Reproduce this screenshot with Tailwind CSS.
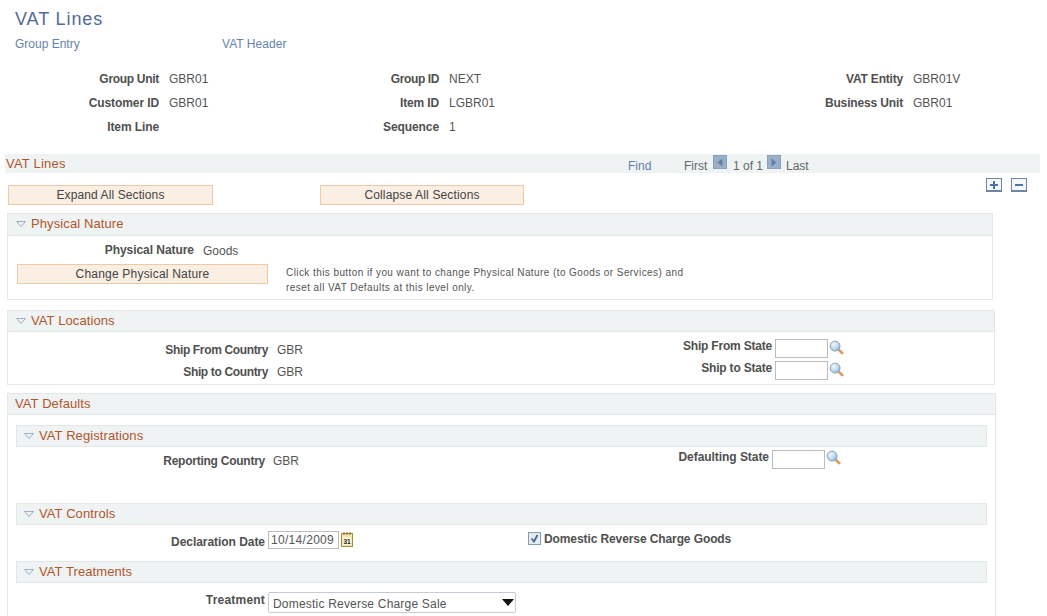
<!DOCTYPE html>
<html>
<head>
<meta charset="utf-8">
<script src="https://cdn.jsdelivr.net/npm/@tailwindcss/browser@4"></script>
</head>
<body class="bg-white">
<svg width="0" height="0" class="absolute">
  <defs>
    <radialGradient id="lens" cx="0.38" cy="0.35" r="0.75"><stop offset="0" stop-color="#f2f8fd"/><stop offset="0.6" stop-color="#b6d5ee"/><stop offset="1" stop-color="#6fa5d6"/></radialGradient>
    <symbol id="mag" viewBox="0 0 16 16"><path d="M10 10L14 14" stroke="#dd9a5e" stroke-width="3" stroke-linecap="round"/><circle cx="6.5" cy="6.5" r="5.3" fill="url(#lens)" stroke="#8ba3b8" stroke-width="1"/></symbol>
    <symbol id="tri" viewBox="0 0 10 8"><path d="M0.5 1.5H9.5L5 6.5Z" fill="#edf2f6" stroke="#9db0c2" stroke-width="1"/></symbol>
  </defs>
</svg>
<div class="w-[1047px] h-[616px] overflow-hidden relative text-[12px] leading-[14px] text-[#555555] font-['Liberation_Sans',Arial,sans-serif]">

  <div class="pl-[15px] pt-[9px]">
    <h1 class="text-[18px] leading-[21px] tracking-[0.9px] text-[#4f6b96]">VAT Lines</h1>
    <div class="flex mt-[7px] text-[#6583ad]">
      <a class="w-[207px]">Group Entry</a>
      <a class="tracking-[0.05px]">VAT Header</a>
    </div>
  </div>

  <div class="mt-[21px] grid grid-cols-[159px_280px_464px_auto] gap-y-[10px]">
    <div class="font-bold text-right text-[#4f4f4f] tracking-[-0.3px]">Group Unit</div>
    <div class="pl-[10px] flex justify-between"><span>GBR01</span><span class="font-bold text-[#4f4f4f] tracking-[-0.4px]">Group ID</span></div>
    <div class="flex justify-between pl-[10px]"><span>NEXT</span><span class="font-bold text-[#4f4f4f] tracking-[-0.2px]">VAT Entity</span></div>
    <div class="pl-[10px]">GBR01V</div>

    <div class="font-bold text-right text-[#4f4f4f] tracking-[-0.1px]">Customer ID</div>
    <div class="pl-[10px] flex justify-between"><span>GBR01</span><span class="font-bold text-[#4f4f4f] tracking-[-0.15px]">Item ID</span></div>
    <div class="flex justify-between pl-[10px]"><span>LGBR01</span><span class="font-bold text-[#4f4f4f] tracking-[-0.15px]">Business Unit</span></div>
    <div class="pl-[10px]">GBR01</div>

    <div class="font-bold text-right text-[#4f4f4f] tracking-[-0.1px]">Item Line</div>
    <div class="pl-[10px] flex justify-end"><span class="font-bold text-[#4f4f4f] tracking-[-0.1px]">Sequence</span></div>
    <div class="pl-[10px]">1</div>
    <div></div>
  </div>

  <div class="mt-[20px] ml-[5px] w-[1035px] h-[19px] bg-[#f0f3f4] flex items-center relative">
    <span class="ml-[1px] text-[13px] tracking-[0.2px] text-[#b0562a]">VAT Lines</span>
    <span class="absolute left-[623px] top-[5px] text-[#5f7ea8]">Find</span>
    <span class="absolute left-[679px] top-[5px] text-[#666666]">First</span>
    <span class="absolute left-[708px] top-[1px] w-[14px] h-[14px] bg-[#9bb0c8] border border-[#8ba0ba] flex items-center justify-center">
      <svg width="6" height="9" viewBox="0 0 6 9"><path d="M5.5 0.5V8.5L0.5 4.5Z" fill="#64809f"/></svg>
    </span>
    <span class="absolute left-[728px] top-[5px] text-[#666666]">1 of 1</span>
    <span class="absolute left-[762px] top-[1px] w-[14px] h-[14px] bg-[#9bb0c8] border border-[#8ba0ba] flex items-center justify-center">
      <svg width="6" height="9" viewBox="0 0 6 9"><path d="M0.5 0.5V8.5L5.5 4.5Z" fill="#5f7fb5"/></svg>
    </span>
    <span class="absolute left-[781px] top-[5px] text-[#666666]">Last</span>
  </div>

  <div class="relative h-[40px]">
    <div class="absolute left-[986px] top-[5px] w-[16px] h-[14px] border border-[#6d86a3] border-b-2 flex items-center justify-center bg-[#f6f8fb]">
      <svg width="10" height="10" viewBox="0 0 10 10"><path d="M5 1V9M1 5H9" stroke="#4a72ad" stroke-width="2"/></svg>
    </div>
    <div class="absolute left-[1011px] top-[5px] w-[16px] h-[14px] border border-[#6d86a3] border-b-2 flex items-center justify-center bg-[#f6f8fb]">
      <svg width="10" height="10" viewBox="0 0 10 10"><path d="M1 5H9" stroke="#4a72ad" stroke-width="2"/></svg>
    </div>
    <div class="flex pl-[8px] pt-[12px] gap-[107px]">
      <button class="w-[205px] h-[20px] bg-[#fbeee2] border border-[#f0c9a4] text-[#444444] tracking-[0.1px]">Expand All Sections</button>
      <button class="w-[204px] h-[20px] bg-[#fbeee2] border border-[#f0c9a4] text-[#444444] tracking-[0.15px]">Collapse All Sections</button>
    </div>
  </div>

  <!-- Physical Nature -->
  <section class="ml-[7px] w-[986px] h-[87px] border border-[#e4e6e7]">
    <div class="h-[22px] pb-[2px] bg-[#f0f3f4] border-b border-[#e4e6e7] flex items-center gap-[5px] pl-[8px]">
      <svg width="10" height="8"><use href="#tri"/></svg>
      <span class="text-[13px] tracking-[0.1px] text-[#b0562a]">Physical Nature</span>
    </div>
    <div class="flex mt-[7px]">
      <div class="w-[186px] text-right font-bold text-[#4f4f4f] tracking-[-0.05px]">Physical Nature</div>
      <div class="ml-[9px] mt-[1px]">Goods</div>
    </div>
    <div class="flex mt-[6px] ml-[9px]">
      <button class="w-[251px] h-[20px] bg-[#fbeee2] border border-[#f0c9a4] text-[#444444] tracking-[0.2px]">Change Physical Nature</button>
      <p class="ml-[18px] mt-[1px] w-[420px] text-[10px] leading-[15px] tracking-[0.42px] text-[#555555]">Click this button if you want to change Physical Nature (to Goods or Services) and<br>reset all VAT Defaults at this level only.</p>
    </div>
  </section>

  <!-- VAT Locations -->
  <section class="ml-[7px] mt-[10px] w-[988px] h-[75px] border border-[#e4e6e7]">
    <div class="h-[21px] bg-[#f0f3f4] border-b border-[#e4e6e7] flex items-center gap-[5px] pl-[8px]">
      <svg width="10" height="8"><use href="#tri"/></svg>
      <span class="text-[13px] tracking-[0.1px] text-[#b0562a]">VAT Locations</span>
    </div>
    <div class="flex flex-col gap-[3px] mt-[7px]">
      <div class="flex h-[19px]">
        <div class="w-[260px] pt-[4px] text-right font-bold text-[#4f4f4f] tracking-[-0.35px]">Ship From Country</div>
        <div class="w-[504px] pl-[9px] flex justify-between"><span class="pt-[4px]">GBR</span><span class="font-bold text-[#4f4f4f] tracking-[-0.2px]">Ship From State</span></div>
        <div class="flex items-start pl-[3px] gap-[1px]"><span class="w-[53px] h-[19px] border border-[#bcbcbc]"></span><svg width="15" height="15" class="mt-[1px]"><use href="#mag"/></svg></div>
      </div>
      <div class="flex h-[19px]">
        <div class="w-[260px] pt-[4px] text-right font-bold text-[#4f4f4f] tracking-[-0.35px]">Ship to Country</div>
        <div class="w-[504px] pl-[9px] flex justify-between"><span class="pt-[4px]">GBR</span><span class="font-bold text-[#4f4f4f] tracking-[-0.2px]">Ship to State</span></div>
        <div class="flex items-start pl-[3px] gap-[1px]"><span class="w-[53px] h-[19px] border border-[#bcbcbc]"></span><svg width="15" height="15" class="mt-[1px]"><use href="#mag"/></svg></div>
      </div>
    </div>
  </section>

  <!-- VAT Defaults -->
  <section class="ml-[7px] mt-[8px] w-[989px] h-[240px] border border-[#e4e6e7] border-b-0">
    <div class="h-[21px] bg-[#f0f3f4] border-b border-[#e4e6e7] flex items-center pl-[7px]">
      <span class="text-[13px] tracking-[0.1px] text-[#b0562a]">VAT Defaults</span>
    </div>

    <div class="ml-[8px] mt-[10px] w-[971px] h-[22px] bg-[#f0f3f4] border border-[#e4e6e7] flex items-center gap-[5px] pl-[7px]">
      <svg width="10" height="8"><use href="#tri"/></svg>
      <span class="text-[13px] tracking-[0.1px] text-[#b0562a]">VAT Registrations</span>
    </div>
    <div class="flex h-[56px] pt-[3px]">
      <div class="w-[257px] text-right font-bold text-[#4f4f4f] pt-[4px] tracking-[-0.25px]">Reporting Country</div>
      <div class="ml-[8px] w-[50px] pt-[4px]">GBR</div>
      <div class="w-[446px] text-right font-bold text-[#4f4f4f] tracking-[-0.05px]">Defaulting State</div>
      <div class="flex items-start pl-[3px] gap-[1px]"><span class="w-[53px] h-[19px] border border-[#bcbcbc]"></span><svg width="15" height="15"><use href="#mag"/></svg></div>
    </div>

    <div class="ml-[8px] w-[971px] h-[22px] bg-[#f0f3f4] border border-[#e4e6e7] flex items-center gap-[5px] pl-[7px]">
      <svg width="10" height="8"><use href="#tri"/></svg>
      <span class="text-[13px] tracking-[0.1px] text-[#b0562a]">VAT Controls</span>
    </div>
    <div class="flex h-[36px] pt-[6px]">
      <div class="w-[257px] text-right font-bold text-[#4f4f4f] pt-[4px] tracking-[-0.05px]">Declaration Date</div>
      <div class="ml-[3px] w-[71px] h-[18px] border border-[#bcbcbc] pl-[2px] leading-[16px] tracking-[0.3px]">10/14/2009</div>
      <svg class="ml-[2px] mt-[1px]" width="13" height="16" viewBox="0 0 13 16"><rect x="0.5" y="1.5" width="11" height="13" fill="#f4e3a8" stroke="#a9893f"/><path d="M3 0V3M6 0V3M9 0V3" stroke="#7a6430"/><rect x="2" y="5" width="8" height="8" fill="#fbf6dc"/><text x="6" y="12" font-size="6.5" font-weight="bold" text-anchor="middle" fill="#222" font-family="Liberation Sans">31</text></svg>
      <div class="ml-[174px] mt-[1px] flex items-start gap-[3px]">
        <span class="w-[13px] h-[13px] border border-[#8c9cae] bg-[#e3ebf3] flex items-center justify-center"><svg width="11" height="11" viewBox="0 0 11 11"><path d="M2.5 5.5L5 8.5L8.5 2" fill="none" stroke="#44628c" stroke-width="1.7"/></svg></span>
        <span class="font-bold text-[#4f4f4f] tracking-[-0.1px]">Domestic Reverse Charge Goods</span>
      </div>
    </div>

    <div class="ml-[8px] w-[971px] h-[22px] bg-[#f0f3f4] border border-[#e4e6e7] flex items-center gap-[5px] pl-[7px]">
      <svg width="10" height="8"><use href="#tri"/></svg>
      <span class="text-[13px] tracking-[0.1px] text-[#b0562a]">VAT Treatments</span>
    </div>
    <div class="flex pt-[9px]">
      <div class="w-[257px] text-right font-bold text-[#4f4f4f] pt-[1px] tracking-[0.2px]">Treatment</div>
      <div class="ml-[3px] w-[248px] h-[21px] border border-[#c4cbd2] rounded-[2px] pl-[4px] flex items-center justify-between pr-[1px] pt-[2px]">
        <span class="tracking-[0.2px]">Domestic Reverse Charge Sale</span>
        <svg class="-mt-[2px]" width="12" height="7" viewBox="0 0 12 7"><path d="M0 0H12L6 7Z" fill="#111"/></svg>
      </div>
    </div>
  </section>
</div>
</body>
</html>
